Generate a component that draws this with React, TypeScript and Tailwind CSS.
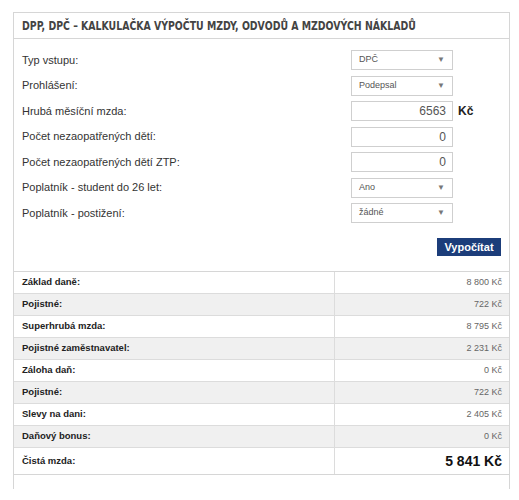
import React from "react";

const Select = ({ value }: { value: string }) => (
  <div className="w-[102px] h-[20px] border border-[#cfcfcf] bg-white flex items-center justify-between pl-[7px] pr-[7px] text-[9px] text-[#555]">
    <span>{value}</span>
    <span className="text-[8px] text-[#777]">▼</span>
  </div>
);

const NumInput = ({ value }: { value: string }) => (
  <div className="w-[102px] h-[20px] border border-[#cfcfcf] bg-white flex items-center justify-end pr-[6px] text-[12px] text-[#555]">
    {value}
  </div>
);

const rows: { label: string; field: React.ReactNode; unit?: string }[] = [
  { label: "Typ vstupu:", field: <Select value="DPČ" /> },
  { label: "Prohlášení:", field: <Select value="Podepsal" /> },
  { label: "Hrubá měsíční mzda:", field: <NumInput value="6563" />, unit: "Kč" },
  { label: "Počet nezaopatřených dětí:", field: <NumInput value="0" /> },
  { label: "Počet nezaopatřených dětí ZTP:", field: <NumInput value="0" /> },
  { label: "Poplatník - student do 26 let:", field: <Select value="Ano" /> },
  { label: "Poplatník - postižení:", field: <Select value="žádné" /> },
];

const results = [
  ["Základ daně:", "8 800 Kč"],
  ["Pojistné:", "722 Kč"],
  ["Superhrubá mzda:", "8 795 Kč"],
  ["Pojistné zaměstnavatel:", "2 231 Kč"],
  ["Záloha daň:", "0 Kč"],
  ["Pojistné:", "722 Kč"],
  ["Slevy na dani:", "2 405 Kč"],
  ["Daňový bonus:", "0 Kč"],
];

export default function App() {
  return (
    <div className="w-[519px] h-[500px] bg-white pt-[12px] pl-[13px] font-['Liberation_Sans',Arial,sans-serif]">
      <div className="w-[497px] border-x border-t border-[#d6d6d6] pb-[14px]">
        <div className="h-[26px] border-b border-[#d6d6d6] flex items-center px-[8px] overflow-hidden">
          <h1 className="origin-left scale-x-[0.8] font-['DejaVu_Sans_Condensed',sans-serif] font-bold text-[13px] text-[#444] whitespace-nowrap">
            DPP, DPČ – KALKULAČKA VÝPOČTU MZDY, ODVODŮ A MZDOVÝCH NÁKLADŮ
          </h1>
        </div>

        <div className="flex flex-col gap-[5.5px] pt-[11px] pl-[8px]">
          {rows.map((r) => (
            <div key={r.label} className="flex items-center h-[20px]">
              <span className="w-[329px] text-[11px] text-[#333]">{r.label}</span>
              {r.field}
              {r.unit && (
                <span className="ml-[5px] text-[12px] font-bold text-[#222]">{r.unit}</span>
              )}
            </div>
          ))}
        </div>

        <div className="flex justify-end pr-[8px] pt-[15px] pb-[15px]">
          <button className="h-[18px] w-[64px] bg-[#1c3d7a] text-white text-[11px] font-bold">
            Vypočítat
          </button>
        </div>

        <div className="border-t border-[#d6d6d6]">
          {results.map(([label, value], i) => (
            <div
              key={i}
              className={`flex h-[22px] border-b border-[#dcdcdc] ${i % 2 === 1 ? "bg-[#f0f0f0]" : "bg-white"}`}
            >
              <div className="w-[321px] border-r border-[#dcdcdc] flex items-center pl-[8px] text-[9.5px] font-bold text-[#222]">
                {label}
              </div>
              <div className="flex-1 flex items-center justify-end pr-[7px] text-[9px] text-[#666]">
                {value}
              </div>
            </div>
          ))}
          <div className="flex h-[27px] border-b border-[#d6d6d6] bg-white">
            <div className="w-[321px] border-r border-[#dcdcdc] flex items-center pl-[8px] text-[9.5px] font-bold text-[#222]">
              Čistá mzda:
            </div>
            <div className="flex-1 flex items-center justify-end pr-[7px] text-[14px] font-bold text-[#111]">
              5 841 Kč
            </div>
          </div>
        </div>
      </div>
    </div>
  );
}
